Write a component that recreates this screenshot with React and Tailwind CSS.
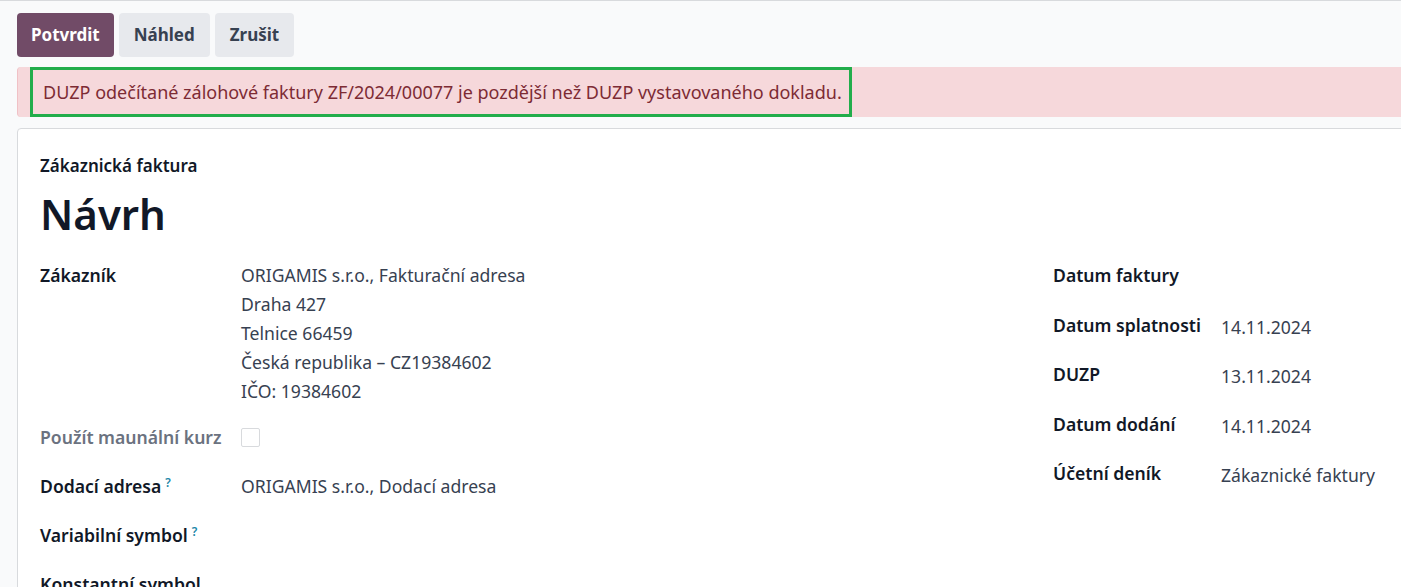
import React from "react";

function Help() {
  return (
    <sup className="ml-1 text-[12px] font-semibold text-[#1a86a8]">?</sup>
  );
}

function Row({ label, help, muted, last, children }) {
  return (
    <div className={"flex " + (last ? "mb-[17px]" : "mb-[20px]")}>
      <div
        className={
          "w-[201px] shrink-0 font-semibold leading-[29px] " +
          (muted ? "text-[#6b7280]" : "text-[#111827]")
        }
      >
        {label}
        {help ? <Help /> : null}
      </div>
      <div className="min-h-[29px] leading-[29px] text-[#374151]">{children}</div>
    </div>
  );
}

function SideRow({ label, value }) {
  return (
    <div className="flex mb-[16.5px]">
      <div className="w-[168px] shrink-0 font-semibold leading-[29px] text-[#111827]">
        {label}
      </div>
      <div className="h-[33px] leading-[33px] text-[#374151]">{value}</div>
    </div>
  );
}

export default function App() {
  return (
    <div
      className="h-[587px] w-[1401px] overflow-hidden bg-[#f9fafb] border-t border-[#d8dadd] text-[17.6px]"
      style={{ fontFamily: '"Noto Sans", "Open Sans", sans-serif' }}
    >
      <div className="pl-[17px] pt-[12px]">
        {/* buttons */}
        <div className="flex gap-[5px] text-[17px]">
          <button className="h-[44px] px-[14px] rounded-[4px] bg-[#714b67] text-white font-bold">
            Potvrdit
          </button>
          <button className="h-[44px] px-[15px] rounded-[4px] bg-[#e7e9ed] text-[#374151] font-bold">
            Náhled
          </button>
          <button className="h-[44px] px-[15px] rounded-[4px] bg-[#e7e9ed] text-[#374151] font-bold">
            Zrušit
          </button>
        </div>

        {/* alert */}
        <div className="mt-[10px] h-[50px] flex rounded-l-[4px] bg-[#f6d8db] border-l border-[#f0c1c6]">
          <div className="ml-[12px] w-[822px] h-[50px] border-[3px] border-[#22ad4b] flex items-center pl-[10px] text-[18px] text-[#7d2b34] whitespace-nowrap">
            DUZP odečítané zálohové faktury ZF/2024/00077 je pozdější než DUZP vystavovaného dokladu.
          </div>
        </div>

        {/* form sheet */}
        <div className="mt-[11px] w-[1420px] h-[480px] bg-white border border-[#d8dadd] rounded-tl-[4px] pl-[22px] pt-[25px]">
          <div className="font-semibold text-[17px] text-[#111827] leading-[24px]">Zákaznická faktura</div>
          <h1 className="mt-[8px] text-[42px] font-semibold leading-[56px] text-[#111827]">Návrh</h1>

          <div className="mt-[19px] flex">
            <div className="w-[1013px] shrink-0">
              <Row label="Zákazník" last>
                <div>ORIGAMIS s.r.o., Fakturační adresa</div>
                <div>Draha 427</div>
                <div>Telnice 66459</div>
                <div>Česká republika – CZ19384602</div>
                <div>IČO: 19384602</div>
              </Row>
              <Row label="Použít maunální kurz" muted>
                <div className="mt-[5px] w-[19px] h-[19px] border border-[#d8dadd] rounded-[2px] bg-white" />
              </Row>
              <Row label="Dodací adresa" help>
                ORIGAMIS s.r.o., Dodací adresa
              </Row>
              <Row label="Variabilní symbol" help />
              <Row label="Konstantní symbol" />
            </div>
            <div className="flex-1">
              <SideRow label="Datum faktury" value="" />
              <SideRow label="Datum splatnosti" value="14.11.2024" />
              <SideRow label="DUZP" value="13.11.2024" />
              <SideRow label="Datum dodání" value="14.11.2024" />
              <SideRow label="Účetní deník" value="Zákaznické faktury" />
            </div>
          </div>
        </div>
      </div>
    </div>
  );
}
